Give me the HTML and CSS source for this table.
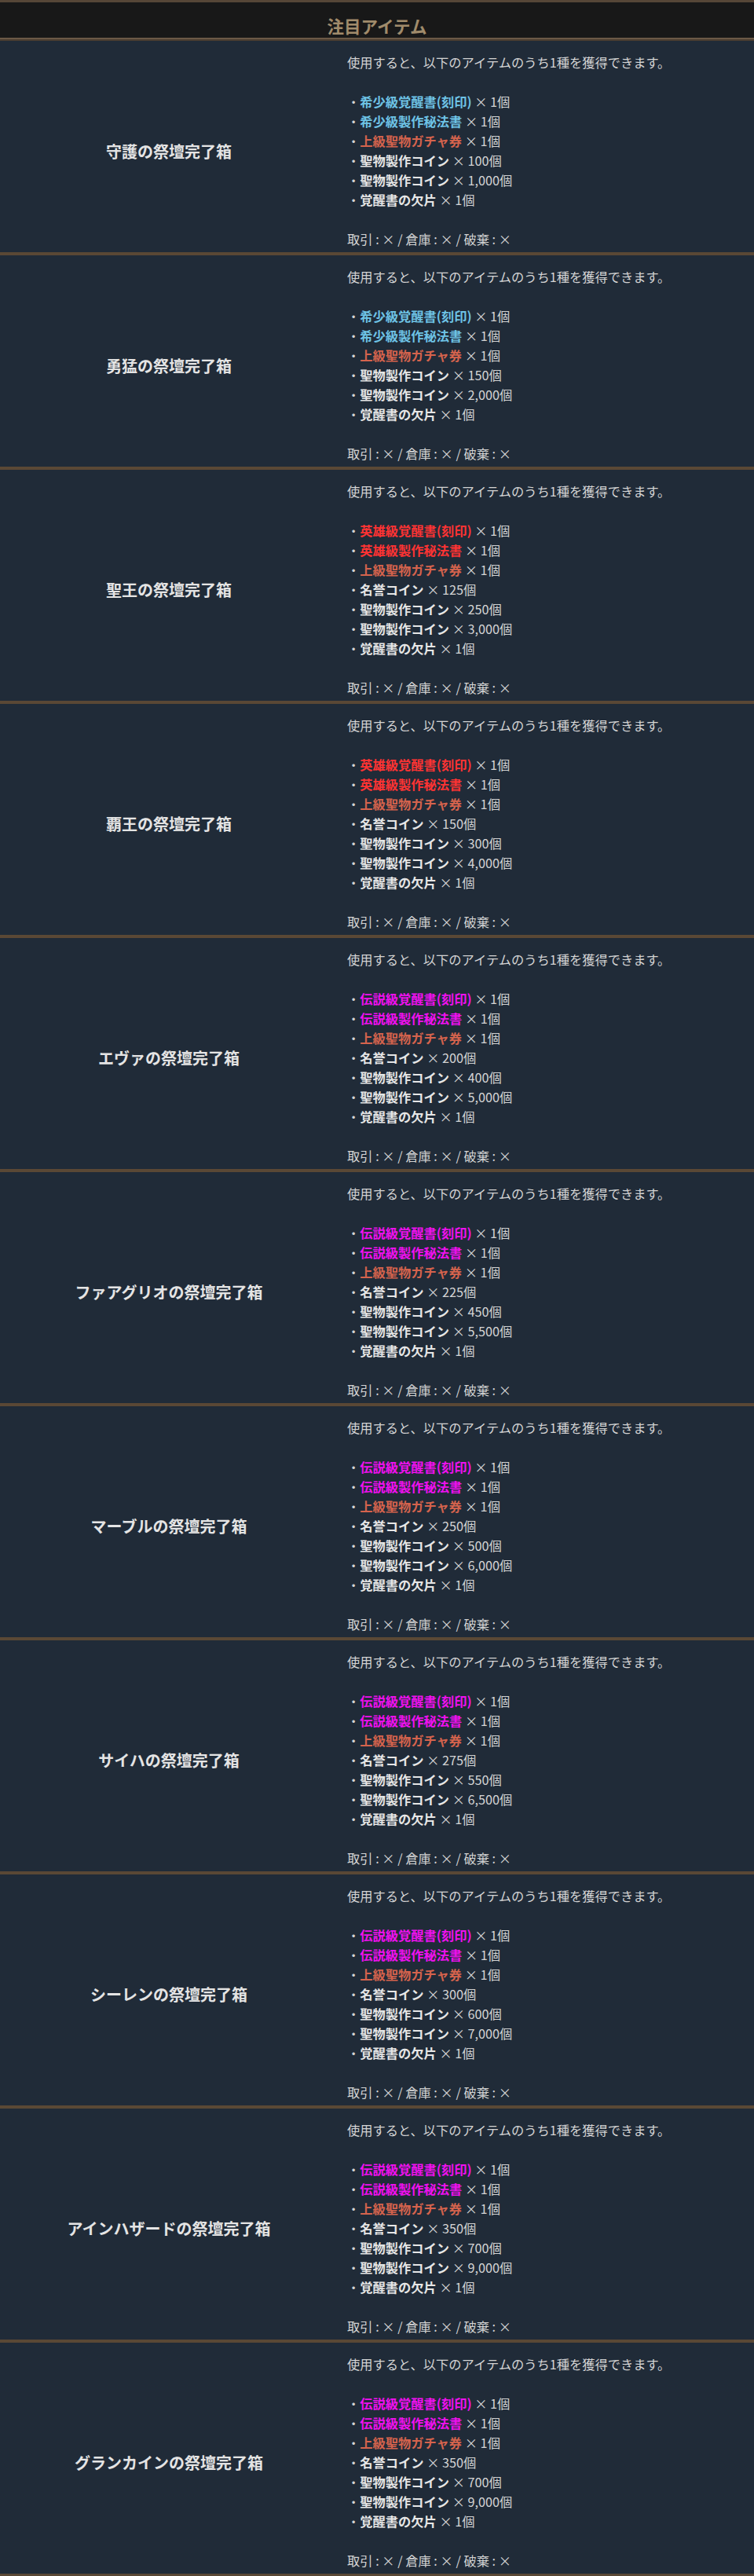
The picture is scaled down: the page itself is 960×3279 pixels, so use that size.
FILE: index.html
```html
<!DOCTYPE html>
<html lang="ja">
<head>
<meta charset="utf-8">
<title>注目アイテム</title>
<link rel="stylesheet" href="styles.css">
</head>
<body>
<div class="table">
  <div class="head">注目アイテム</div>

  <div class="row">
    <div class="label">守護の祭壇完了箱</div>
    <div class="desc">
      <p>使用すると、以下のアイテムのうち1種を獲得できます。</p>
      <ul class="items">
        <li>・<b class="blue">希少級覚醒書(刻印)</b> × 1個</li>
        <li>・<b class="blue">希少級製作秘法書</b> × 1個</li>
        <li>・<b class="orange">上級聖物ガチャ券</b> × 1個</li>
        <li>・<b>聖物製作コイン</b> × 100個</li>
        <li>・<b>聖物製作コイン</b> × 1,000個</li>
        <li>・<b>覚醒書の欠片</b> × 1個</li>
      </ul>
      <p>取引 : × / 倉庫 : × / 破棄 : ×</p>
    </div>
  </div>

  <div class="row">
    <div class="label">勇猛の祭壇完了箱</div>
    <div class="desc">
      <p>使用すると、以下のアイテムのうち1種を獲得できます。</p>
      <ul class="items">
        <li>・<b class="blue">希少級覚醒書(刻印)</b> × 1個</li>
        <li>・<b class="blue">希少級製作秘法書</b> × 1個</li>
        <li>・<b class="orange">上級聖物ガチャ券</b> × 1個</li>
        <li>・<b>聖物製作コイン</b> × 150個</li>
        <li>・<b>聖物製作コイン</b> × 2,000個</li>
        <li>・<b>覚醒書の欠片</b> × 1個</li>
      </ul>
      <p>取引 : × / 倉庫 : × / 破棄 : ×</p>
    </div>
  </div>

  <div class="row">
    <div class="label">聖王の祭壇完了箱</div>
    <div class="desc">
      <p>使用すると、以下のアイテムのうち1種を獲得できます。</p>
      <ul class="items">
        <li>・<b class="red">英雄級覚醒書(刻印)</b> × 1個</li>
        <li>・<b class="red">英雄級製作秘法書</b> × 1個</li>
        <li>・<b class="orange">上級聖物ガチャ券</b> × 1個</li>
        <li>・<b>名誉コイン</b> × 125個</li>
        <li>・<b>聖物製作コイン</b> × 250個</li>
        <li>・<b>聖物製作コイン</b> × 3,000個</li>
        <li>・<b>覚醒書の欠片</b> × 1個</li>
      </ul>
      <p>取引 : × / 倉庫 : × / 破棄 : ×</p>
    </div>
  </div>

  <div class="row">
    <div class="label">覇王の祭壇完了箱</div>
    <div class="desc">
      <p>使用すると、以下のアイテムのうち1種を獲得できます。</p>
      <ul class="items">
        <li>・<b class="red">英雄級覚醒書(刻印)</b> × 1個</li>
        <li>・<b class="red">英雄級製作秘法書</b> × 1個</li>
        <li>・<b class="orange">上級聖物ガチャ券</b> × 1個</li>
        <li>・<b>名誉コイン</b> × 150個</li>
        <li>・<b>聖物製作コイン</b> × 300個</li>
        <li>・<b>聖物製作コイン</b> × 4,000個</li>
        <li>・<b>覚醒書の欠片</b> × 1個</li>
      </ul>
      <p>取引 : × / 倉庫 : × / 破棄 : ×</p>
    </div>
  </div>

  <div class="row">
    <div class="label">エヴァの祭壇完了箱</div>
    <div class="desc">
      <p>使用すると、以下のアイテムのうち1種を獲得できます。</p>
      <ul class="items">
        <li>・<b class="magenta">伝説級覚醒書(刻印)</b> × 1個</li>
        <li>・<b class="magenta">伝説級製作秘法書</b> × 1個</li>
        <li>・<b class="orange">上級聖物ガチャ券</b> × 1個</li>
        <li>・<b>名誉コイン</b> × 200個</li>
        <li>・<b>聖物製作コイン</b> × 400個</li>
        <li>・<b>聖物製作コイン</b> × 5,000個</li>
        <li>・<b>覚醒書の欠片</b> × 1個</li>
      </ul>
      <p>取引 : × / 倉庫 : × / 破棄 : ×</p>
    </div>
  </div>

  <div class="row">
    <div class="label">ファアグリオの祭壇完了箱</div>
    <div class="desc">
      <p>使用すると、以下のアイテムのうち1種を獲得できます。</p>
      <ul class="items">
        <li>・<b class="magenta">伝説級覚醒書(刻印)</b> × 1個</li>
        <li>・<b class="magenta">伝説級製作秘法書</b> × 1個</li>
        <li>・<b class="orange">上級聖物ガチャ券</b> × 1個</li>
        <li>・<b>名誉コイン</b> × 225個</li>
        <li>・<b>聖物製作コイン</b> × 450個</li>
        <li>・<b>聖物製作コイン</b> × 5,500個</li>
        <li>・<b>覚醒書の欠片</b> × 1個</li>
      </ul>
      <p>取引 : × / 倉庫 : × / 破棄 : ×</p>
    </div>
  </div>

  <div class="row">
    <div class="label">マーブルの祭壇完了箱</div>
    <div class="desc">
      <p>使用すると、以下のアイテムのうち1種を獲得できます。</p>
      <ul class="items">
        <li>・<b class="magenta">伝説級覚醒書(刻印)</b> × 1個</li>
        <li>・<b class="magenta">伝説級製作秘法書</b> × 1個</li>
        <li>・<b class="orange">上級聖物ガチャ券</b> × 1個</li>
        <li>・<b>名誉コイン</b> × 250個</li>
        <li>・<b>聖物製作コイン</b> × 500個</li>
        <li>・<b>聖物製作コイン</b> × 6,000個</li>
        <li>・<b>覚醒書の欠片</b> × 1個</li>
      </ul>
      <p>取引 : × / 倉庫 : × / 破棄 : ×</p>
    </div>
  </div>

  <div class="row">
    <div class="label">サイハの祭壇完了箱</div>
    <div class="desc">
      <p>使用すると、以下のアイテムのうち1種を獲得できます。</p>
      <ul class="items">
        <li>・<b class="magenta">伝説級覚醒書(刻印)</b> × 1個</li>
        <li>・<b class="magenta">伝説級製作秘法書</b> × 1個</li>
        <li>・<b class="orange">上級聖物ガチャ券</b> × 1個</li>
        <li>・<b>名誉コイン</b> × 275個</li>
        <li>・<b>聖物製作コイン</b> × 550個</li>
        <li>・<b>聖物製作コイン</b> × 6,500個</li>
        <li>・<b>覚醒書の欠片</b> × 1個</li>
      </ul>
      <p>取引 : × / 倉庫 : × / 破棄 : ×</p>
    </div>
  </div>

  <div class="row">
    <div class="label">シーレンの祭壇完了箱</div>
    <div class="desc">
      <p>使用すると、以下のアイテムのうち1種を獲得できます。</p>
      <ul class="items">
        <li>・<b class="magenta">伝説級覚醒書(刻印)</b> × 1個</li>
        <li>・<b class="magenta">伝説級製作秘法書</b> × 1個</li>
        <li>・<b class="orange">上級聖物ガチャ券</b> × 1個</li>
        <li>・<b>名誉コイン</b> × 300個</li>
        <li>・<b>聖物製作コイン</b> × 600個</li>
        <li>・<b>聖物製作コイン</b> × 7,000個</li>
        <li>・<b>覚醒書の欠片</b> × 1個</li>
      </ul>
      <p>取引 : × / 倉庫 : × / 破棄 : ×</p>
    </div>
  </div>

  <div class="row">
    <div class="label">アインハザードの祭壇完了箱</div>
    <div class="desc">
      <p>使用すると、以下のアイテムのうち1種を獲得できます。</p>
      <ul class="items">
        <li>・<b class="magenta">伝説級覚醒書(刻印)</b> × 1個</li>
        <li>・<b class="magenta">伝説級製作秘法書</b> × 1個</li>
        <li>・<b class="orange">上級聖物ガチャ券</b> × 1個</li>
        <li>・<b>名誉コイン</b> × 350個</li>
        <li>・<b>聖物製作コイン</b> × 700個</li>
        <li>・<b>聖物製作コイン</b> × 9,000個</li>
        <li>・<b>覚醒書の欠片</b> × 1個</li>
      </ul>
      <p>取引 : × / 倉庫 : × / 破棄 : ×</p>
    </div>
  </div>

  <div class="row">
    <div class="label">グランカインの祭壇完了箱</div>
    <div class="desc">
      <p>使用すると、以下のアイテムのうち1種を獲得できます。</p>
      <ul class="items">
        <li>・<b class="magenta">伝説級覚醒書(刻印)</b> × 1個</li>
        <li>・<b class="magenta">伝説級製作秘法書</b> × 1個</li>
        <li>・<b class="orange">上級聖物ガチャ券</b> × 1個</li>
        <li>・<b>名誉コイン</b> × 350個</li>
        <li>・<b>聖物製作コイン</b> × 700個</li>
        <li>・<b>聖物製作コイン</b> × 9,000個</li>
        <li>・<b>覚醒書の欠片</b> × 1個</li>
      </ul>
      <p>取引 : × / 倉庫 : × / 破棄 : ×</p>
    </div>
  </div>
</div>
</body>
</html>
```

FILE: styles.css
```css
html, body {
  margin: 0;
  padding: 0;
  background: #202b38;
}

body {
  font-family: "Noto Sans CJK JP", "Noto Sans", sans-serif;
  color: #d4d4d4;
  font-size: 16.25px;
  line-height: 25px;
}

.table {
  width: 960px;
  border-top: 3px solid #564637;
}

.head {
  background: #181818;
  color: #a08b6b;
  font-weight: 700;
  font-size: 21.5px;
  line-height: 26px;
  text-align: center;
  padding: 17px 0 4px;
  border-bottom: 2px solid #4b3e31;
  box-shadow: inset 0 -2px 0 #6b5946;
}

.row {
  display: grid;
  grid-template-columns: 430px 1fr;
  background: #202b38;
  border-bottom: 4px solid #5a4835;
}

.label,
.desc {
  padding: 15px 0 4px;
}

.label {
  display: flex;
  align-items: center;
  justify-content: center;
  font-weight: 700;
  font-size: 20px;
  color: #e4e4e4;
}

.desc {
  padding-left: 12px;
  display: flex;
  flex-direction: column;
  gap: 25px;
}

.desc p {
  margin: 0;
}

.items {
  list-style: none;
  margin: 0;
  padding: 0;
}

.items li {
  color: #d4d4d4;
}

.items b {
  font-weight: 700;
  color: #e6e6e6;
}

.items b.blue {
  color: #6ec3e6;
}

.items b.orange {
  color: #d5634d;
}

.items b.red {
  color: #ff3333;
}

.items b.magenta {
  color: #f010f0;
}
```
